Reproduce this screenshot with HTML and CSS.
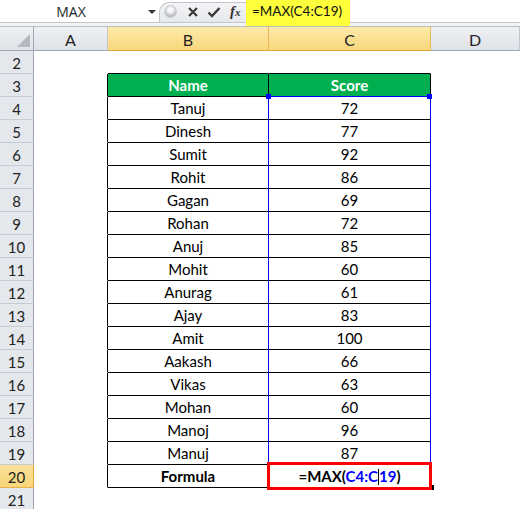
FILE: index.html
```html
<!DOCTYPE html>
<html>
<head>
<meta charset="utf-8">
<link rel="stylesheet" href="styles.css">
</head>
<body>
<div class="fbar">
  <div class="namebox">
    <span class="nb-text">MAX</span>
    <span class="nb-arrow"></span>
  </div>
  <div class="fbtns">
    <span class="knob"></span>
    <svg class="ico" width="12" height="12" viewBox="0 0 12 12"><path d="M2 2 L10 10 M10 2 L2 10" stroke="#3a3a3a" stroke-width="2.2" fill="none"/></svg>
    <svg class="ico" width="14" height="12" viewBox="0 0 14 12"><path d="M1.5 6.5 L5 10 L12.5 2" stroke="#3a3a3a" stroke-width="2.4" fill="none"/></svg>
    <span class="fx">f<span class="fx-x">x</span></span>
  </div>
  <div class="finput"><span class="fhl">=MAX(C4:C19)</span></div>
</div>

<div class="sheet">
  <div class="row hdr">
    <div class="c rh corner"><span class="tri"></span></div>
    <div class="c ca ch">A</div>
    <div class="c cb ch sel">B</div>
    <div class="c cc ch sel">C</div>
    <div class="c cd ch">D</div>
  </div>

  <div class="row"><div class="c rh">2</div><div class="c ca"></div><div class="c cb tb2"></div><div class="c cc tb2"></div><div class="c cd"></div></div>

  <div class="row"><div class="c rh">3</div><div class="c ca tl"></div><div class="c cb t th">Name</div><div class="c cc t th bl-b">Score</div><div class="c cd"></div></div>

  <div class="row"><div class="c rh">4</div><div class="c ca tl"></div><div class="c cb t bl-r">Tanuj</div><div class="c cc t bl-r">72<span class="sq sq-l"></span><span class="sq sq-r"></span></div><div class="c cd"></div></div>
  <div class="row"><div class="c rh">5</div><div class="c ca tl"></div><div class="c cb t bl-r">Dinesh</div><div class="c cc t bl-r">77</div><div class="c cd"></div></div>
  <div class="row"><div class="c rh">6</div><div class="c ca tl"></div><div class="c cb t bl-r">Sumit</div><div class="c cc t bl-r">92</div><div class="c cd"></div></div>
  <div class="row"><div class="c rh">7</div><div class="c ca tl"></div><div class="c cb t bl-r">Rohit</div><div class="c cc t bl-r">86</div><div class="c cd"></div></div>
  <div class="row"><div class="c rh">8</div><div class="c ca tl"></div><div class="c cb t bl-r">Gagan</div><div class="c cc t bl-r">69</div><div class="c cd"></div></div>
  <div class="row"><div class="c rh">9</div><div class="c ca tl"></div><div class="c cb t bl-r">Rohan</div><div class="c cc t bl-r">72</div><div class="c cd"></div></div>
  <div class="row"><div class="c rh">10</div><div class="c ca tl"></div><div class="c cb t bl-r">Anuj</div><div class="c cc t bl-r">85</div><div class="c cd"></div></div>
  <div class="row"><div class="c rh">11</div><div class="c ca tl"></div><div class="c cb t bl-r">Mohit</div><div class="c cc t bl-r">60</div><div class="c cd"></div></div>
  <div class="row"><div class="c rh">12</div><div class="c ca tl"></div><div class="c cb t bl-r">Anurag</div><div class="c cc t bl-r">61</div><div class="c cd"></div></div>
  <div class="row"><div class="c rh">13</div><div class="c ca tl"></div><div class="c cb t bl-r">Ajay</div><div class="c cc t bl-r">83</div><div class="c cd"></div></div>
  <div class="row"><div class="c rh">14</div><div class="c ca tl"></div><div class="c cb t bl-r">Amit</div><div class="c cc t bl-r">100</div><div class="c cd"></div></div>
  <div class="row"><div class="c rh">15</div><div class="c ca tl"></div><div class="c cb t bl-r">Aakash</div><div class="c cc t bl-r">66</div><div class="c cd"></div></div>
  <div class="row"><div class="c rh">16</div><div class="c ca tl"></div><div class="c cb t bl-r">Vikas</div><div class="c cc t bl-r">63</div><div class="c cd"></div></div>
  <div class="row"><div class="c rh">17</div><div class="c ca tl"></div><div class="c cb t bl-r">Mohan</div><div class="c cc t bl-r">60</div><div class="c cd"></div></div>
  <div class="row"><div class="c rh">18</div><div class="c ca tl"></div><div class="c cb t bl-r">Manoj</div><div class="c cc t bl-r">96</div><div class="c cd"></div></div>
  <div class="row"><div class="c rh">19</div><div class="c ca tl"></div><div class="c cb t bl-r">Manuj</div><div class="c cc t bl-r">87</div><div class="c cd"></div></div>

  <div class="row"><div class="c rh rsel">20</div><div class="c ca tl"></div><div class="c cb t bold">Formula</div><div class="c cc t bold act"><span class="fill"></span><span class="redbox"></span><span class="ftxt">=MAX(<span class="ref">C4:C</span><span class="caret"></span><span class="ref">19</span>)</span></div><div class="c cd"></div></div>

  <div class="row"><div class="c rh">21</div><div class="c ca"></div><div class="c cb"></div><div class="c cc"></div><div class="c cd"></div></div>
</div>
</body>
</html>
```

FILE: styles.css
```css
* { box-sizing: border-box; }
html, body { margin: 0; padding: 0; background: #fff; }
body {
  width: 520px; height: 509px; overflow: hidden;
  font-family: "Lato", "Liberation Sans", sans-serif;
  font-size: 15px; color: #000;
}

/* formula bar */
.fbar {
  height: 27px;
  display: flex;
  align-items: flex-start;
  background: linear-gradient(#fff 0 22px, #c3c7cc 22px 23px, #f2f3f5 23px 26px, #b8bdc4 26px 27px);
}
.namebox {
  width: 159px; height: 22px;
  display: flex; align-items: center;
  position: relative;
}
.nb-text {
  width: 142px; text-align: center;
  font-family: "Open Sans", "Liberation Sans", sans-serif;
  font-size: 14px; color: #1b1f2e;
  padding-top: 1px;
}
.nb-arrow {
  width: 0; height: 0;
  border-left: 4px solid transparent;
  border-right: 4px solid transparent;
  border-top: 4px solid #333;
  margin-left: 6px; margin-top: 2px;
}
.fbtns {
  width: 87px; height: 20px; margin-top: 2px;
  background: linear-gradient(#f4f5f7, #e6e8eb);
  border: 1px solid #c2c6cc; border-right: none; border-bottom: none;
  border-radius: 10px 0 0 0;
  display: flex; align-items: center;
  padding-left: 4px;
}
.knob {
  width: 13px; height: 13px; border-radius: 50%;
  background: radial-gradient(circle at 50% 35%, #fafafa 0 2px, #d0d3d7 5px, #b9bdc2 6px);
  border: 1px solid #c9ccd0;
  margin-right: 10px; margin-top: -2px;
}
.ico { display: block; margin-right: 8px; margin-top: -1px; }
.fx {
  font-family: "Liberation Serif", serif; font-style: italic;
  font-size: 15px; color: #333; margin-left: 1px; margin-top: -3px;
  font-weight: bold;
}
.fx-x { font-size: 11px; }
.finput { flex: 1; height: 26px; }
.fhl {
  display: inline-block; height: 26px;
  background: #ffff3c;
  padding: 3px 8px 0 6px;
  font-family: "Lato", "Liberation Sans", sans-serif;
  font-size: 13.5px; color: #111;
  line-height: 17px;
}

/* sheet */
.row { display: flex; height: 23px; }
.row.hdr { height: 24px; }
.c {
  height: 100%;
  border-right: 1px solid transparent;
  border-bottom: 1px solid transparent;
  display: flex; align-items: center; justify-content: center;
  position: relative;
  line-height: 1;
}
.rh {
  width: 34px;
  background: #e4e7eb;
  border-right-color: #9ea7b3;
  border-bottom-color: #c6ccd4;
  color: #222;
  font-size: 15px;
  padding-top: 2px;
}
.rh.rsel {
  background: linear-gradient(#fbe29a, #f8d577);
  border-bottom-color: #e8b24e;
  border-right-color: #e8a93c;
}
.ca { width: 74px; }
.cb { width: 161px; }
.cc { width: 162px; }
.cd { flex: 1; }

.hdr .c {
  background: linear-gradient(#eef0f3, #dfe3e8);
  border-right-color: #c2c8d0;
  border-bottom-color: #9ea7b3;
  color: #222;
  font-size: 16px;
  padding-top: 2px;
}
.hdr .corner { border-right-color: #9ea7b3; align-items: flex-end; justify-content: flex-end; padding: 0 3px 3px 0; }
.tri {
  width: 0; height: 0;
  border-left: 13px solid transparent;
  border-bottom: 13px solid #b4b9c0;
}
.hdr .sel {
  background: linear-gradient(#fdeaaa, #f9d77c);
  border-right-color: #e9b659;
  border-bottom-color: #e3a83a;
}

/* table */
.tb2 { border-bottom-color: #000; }
.tl { border-right-color: #000; }
.t { border-right-color: #000; border-bottom-color: #000; padding-top: 1px; }
.th { background: #00b050; color: #fff; font-weight: bold; }
.bold { font-weight: bold; }
.cc.th.bl-b { border-bottom-color: #0000ff; }
.cb.bl-r { border-right-color: #0000ff; }
.cc.bl-r { border-right-color: #0000ff; }

.sq {
  position: absolute; width: 5px; height: 5px; background: #0000ff; top: -3px;
}
.sq-l { left: -3px; }
.sq-r { right: -2px; }

.act .redbox {
  position: absolute; left: -2px; top: -3px; right: -2px; bottom: -3px;
  border: 3.5px solid #ff0000;
}
.act .fill {
  position: absolute; right: -4px; bottom: -3px; width: 5px; height: 5px; background: #000;
}
.ftxt { position: relative; }
.ref { color: #0000ff; }
.caret {
  display: inline-block; width: 1px; height: 16px; background: #000;
  vertical-align: -3px;
}
```
